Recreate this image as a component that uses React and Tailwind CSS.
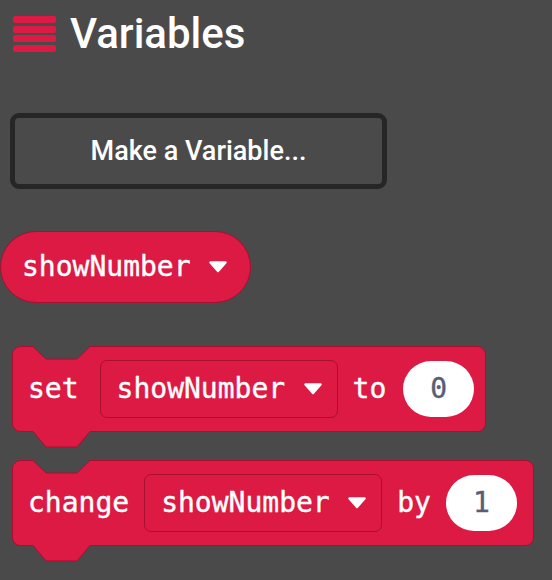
import React from 'react';

const RED = '#dc1a44';
const EDGE = '#a80f30';

// blockly statement block outline: notch on top, tab on bottom
const blockPath = (w, h) => {
  const r = 8;
  const a = 21; // notch offset from left
  const s = 13; // slope width
  const f = 31; // flat part
  const dt = 13; // notch depth
  const db = 15; // tab depth
  return [
    `M0.5,${r}`,
    `A${r},${r} 0 0 1 ${r},0.5`,
    `H${a}`,
    `L${a + s},${dt}`,
    `H${a + s + f}`,
    `L${a + 2 * s + f},0.5`,
    `H${w - r}`,
    `A${r},${r} 0 0 1 ${w - 0.5},${r}`,
    `V${h - r}`,
    `A${r},${r} 0 0 1 ${w - r},${h - 0.5}`,
    `H${a + 2 * s + f}`,
    `L${a + s + f},${h + db}`,
    `H${a + s}`,
    `L${a},${h - 0.5}`,
    `H${r}`,
    `A${r},${r} 0 0 1 0.5,${h - r}`,
    'Z',
  ].join(' ');
};

const Caret = () => (
  <svg width="20" height="12" viewBox="0 0 20 12" className="shrink-0">
    <path d="M2.5 1.5 H17.5 L10 10 Z" fill="white" stroke="white" strokeWidth="2.5" strokeLinejoin="round" />
  </svg>
);

const Dropdown = ({ label }) => (
  <div className="flex items-center h-[58px] w-[238px] rounded-[7px] border border-[#a80f30] pl-4 pr-[14px]">
    <span>{label}</span>
    <span className="ml-auto">
      <Caret />
    </span>
  </div>
);

const NumberField = ({ value }) => (
  <div className="flex items-center justify-center h-[56px] w-[71px] rounded-full bg-white text-[#575e75] [-webkit-text-stroke:0.4px_#575e75]">
    {value}
  </div>
);

const Block = ({ width, children }) => (
  <div
    className="relative flex items-center h-[86px] pl-4 text-white text-[28px] font-['DejaVu_Sans_Mono',monospace] [-webkit-text-stroke:0.4px_white]"
    style={{ width }}
  >
    <svg
      width={width}
      height={102}
      className="absolute left-0 top-0 overflow-visible"
    >
      <path d={blockPath(width, 86)} fill={RED} stroke={EDGE} strokeWidth="1" />
    </svg>
    <div className="relative flex items-center">{children}</div>
  </div>
);

export default function App() {
  return (
    <div className="w-[552px] h-[580px] bg-[#4b4a4b] overflow-hidden font-['Roboto','Liberation_Sans',sans-serif]">
      {/* header */}
      <div className="flex items-center pl-[13px] pt-[16px]">
        <div className="flex flex-col gap-[2.5px] w-[43px]">
          <div className="h-[7px] rounded-[2px] bg-[#dc1a44]" />
          <div className="h-[7px] rounded-[2px] bg-[#dc1a44]" />
          <div className="h-[7px] rounded-[2px] bg-[#dc1a44]" />
          <div className="h-[7px] rounded-[2px] bg-[#dc1a44]" />
        </div>
        <h1 className="ml-[14px] text-[42px] font-medium leading-[36px] text-white">Variables</h1>
      </div>

      {/* make a variable */}
      <button className="mt-[61px] ml-[10px] flex items-center justify-center w-[377px] h-[76px] rounded-[9px] border-[5px] border-[#262626] text-white text-[27px] font-medium">
        Make a Variable...
      </button>

      {/* variable reporter */}
      <div className="mt-[42px] flex items-center h-[72px] w-[251px] rounded-full bg-[#dc1a44] border border-[#a80f30] pl-[21px] pr-[22px] text-white text-[28px] font-['DejaVu_Sans_Mono',monospace] [-webkit-text-stroke:0.4px_white]">
        <span>showNumber</span>
        <span className="ml-auto">
          <Caret />
        </span>
      </div>

      {/* set block */}
      <div className="mt-[43px] ml-[12px]">
        <Block width={474}>
          <span>set</span>
          <div className="ml-[21px]">
            <Dropdown label="showNumber" />
          </div>
          <span className="ml-[15px]">to</span>
          <div className="ml-[17px]">
            <NumberField value="0" />
          </div>
        </Block>
      </div>

      {/* change block */}
      <div className="mt-[28px] ml-[12px]">
        <Block width={522}>
          <span>change</span>
          <div className="ml-[15px]">
            <Dropdown label="showNumber" />
          </div>
          <span className="ml-[15px]">by</span>
          <div className="ml-[15px]">
            <NumberField value="1" />
          </div>
        </Block>
      </div>
    </div>
  );
}
